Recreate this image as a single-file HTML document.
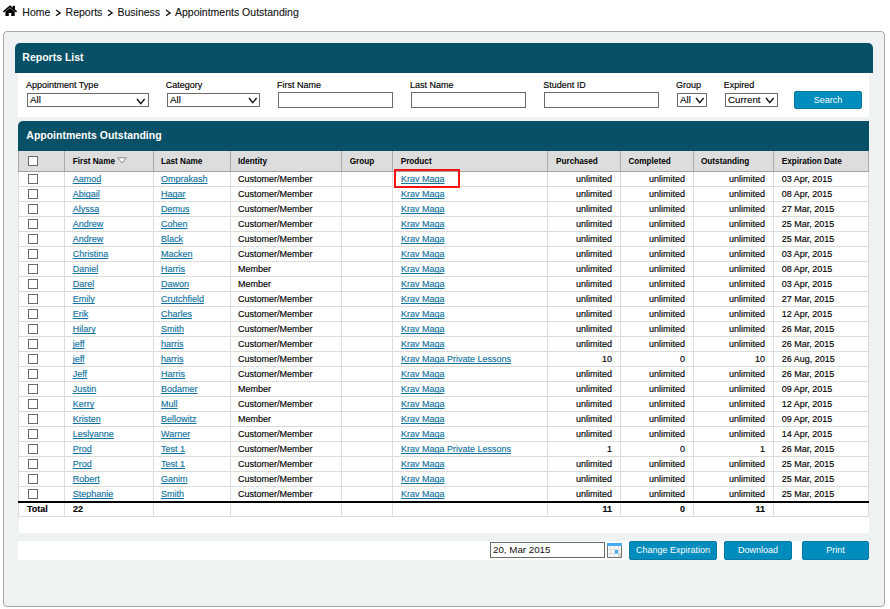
<!DOCTYPE html><html><head><meta charset="utf-8"><style>
*{margin:0;padding:0;box-sizing:border-box}
html,body{width:890px;height:609px;overflow:hidden;background:#fff}
body{position:relative;font-family:"Liberation Sans",sans-serif;color:#222}
.a{position:absolute;white-space:nowrap}
.crumb{font-size:10.5px;color:#111;-webkit-text-stroke-width:0.1px;top:5px;line-height:14px}
.sep{top:9px}
.panel{left:3px;top:31px;width:882px;height:576px;background:#eff2f3;border:1px solid #a8a8a8;border-radius:4px}
.hdr{background:#075066;border-radius:5px 5px 0 0}
.hdrt{color:#fff;font-weight:bold;font-size:10.5px;line-height:12px}
.wh{background:#fff}
.lbl{font-size:9px;color:#000;line-height:10px;-webkit-text-stroke-width:0.15px}
.sel{background:#fff;border:1px solid #6b6b6b;font-size:9.75px;line-height:12px;color:#000;-webkit-text-stroke-width:0.1px}
.inp{background:#fff;border:1px solid #6b6b6b}
.btn{background:#008cbc;border:1px solid #0679a6;border-radius:2px;color:#fff;font-size:9px;text-align:center}
.th{font-weight:bold;font-size:8.2px;color:#000;line-height:10px}
.td{font-size:9px;color:#000;line-height:15px;-webkit-text-stroke-width:0.15px}
.lk{color:#13749f;text-decoration:underline;text-decoration-skip-ink:none}
.r{text-align:right}
.cb{width:10px;height:10px;border:1px solid #6a6a6a;border-radius:0;background:#fff}
.vl{width:1px}
.hl{height:1px}
</style></head><body>
<svg class="a" style="left:0;top:2px" width="20" height="18" viewBox="0 0 20 18"><path d="M3.4 9.8 L10 4.3 L16.6 9.8" stroke="#000" stroke-width="1.7" fill="none"/><rect x="12.7" y="3.8" width="2.3" height="3.8" fill="#000"/><path d="M5.4 9.6 L10 6.1 L14.7 9.6 V13.9 H11.3 V10.9 H8.8 V13.9 H5.4 Z" fill="#000"/></svg>
<div class="a crumb" style="left:22.3px">Home</div>
<div class="a crumb" style="left:65.6px">Reports</div>
<div class="a crumb" style="left:117.5px">Business</div>
<div class="a crumb" style="left:175px">Appointments Outstanding</div>
<svg class="a" style="left:55.2px;top:8.5px" width="7" height="8" viewBox="0 0 7 8"><path d="M1 1 L5.2 3.9 L1 6.8" stroke="#111" stroke-width="1.3" fill="none"/></svg>
<svg class="a" style="left:107.2px;top:8.5px" width="7" height="8" viewBox="0 0 7 8"><path d="M1 1 L5.2 3.9 L1 6.8" stroke="#111" stroke-width="1.3" fill="none"/></svg>
<svg class="a" style="left:164.7px;top:8.5px" width="7" height="8" viewBox="0 0 7 8"><path d="M1 1 L5.2 3.9 L1 6.8" stroke="#111" stroke-width="1.3" fill="none"/></svg>
<div class="a panel"></div>
<div class="a hdr" style="left:15px;top:43px;width:858px;height:30px"></div>
<div class="a hdrt" style="left:22.3px;top:51px">Reports List</div>
<div class="a wh" style="left:18px;top:73px;width:851px;height:44px"></div>
<div class="a lbl" style="left:26px;top:80px">Appointment Type</div>
<div class="a lbl" style="left:165.7px;top:80px">Category</div>
<div class="a lbl" style="left:277px;top:80px">First Name</div>
<div class="a lbl" style="left:410px;top:80px">Last Name</div>
<div class="a lbl" style="left:543.3px;top:80px">Student ID</div>
<div class="a lbl" style="left:676px;top:80px">Group</div>
<div class="a lbl" style="left:723.7px;top:80px">Expired</div>
<div class="a sel" style="left:27px;top:93px;width:122px;height:14px;padding-left:2px">All</div>
<svg class="a" style="left:136px;top:97.5px" width="10" height="7" viewBox="0 0 10 7"><path d="M1 1 L4.8 5.6 L8.6 1" stroke="#111" stroke-width="1.4" fill="none"/></svg>
<div class="a sel" style="left:167px;top:93px;width:93px;height:14px;padding-left:2px">All</div>
<svg class="a" style="left:247.5px;top:97px" width="10" height="7" viewBox="0 0 10 7"><path d="M1 1 L4.8 5.6 L8.6 1" stroke="#111" stroke-width="1.4" fill="none"/></svg>
<div class="a sel" style="left:677px;top:93px;width:30px;height:14px;padding-left:2px">All</div>
<svg class="a" style="left:695px;top:96.5px" width="10" height="7" viewBox="0 0 10 7"><path d="M1 1 L4.8 5.6 L8.6 1" stroke="#111" stroke-width="1.4" fill="none"/></svg>
<div class="a sel" style="left:725px;top:93px;width:53px;height:14px;padding-left:2px">Current</div>
<svg class="a" style="left:764.5px;top:97px" width="10" height="7" viewBox="0 0 10 7"><path d="M1 1 L4.8 5.6 L8.6 1" stroke="#111" stroke-width="1.4" fill="none"/></svg>
<div class="a inp" style="left:278px;top:92px;width:115px;height:16px"></div>
<div class="a inp" style="left:411px;top:92px;width:115px;height:16px"></div>
<div class="a inp" style="left:544px;top:92px;width:115px;height:16px"></div>
<div class="a btn" style="left:794px;top:91px;width:68px;height:18px;line-height:16px">Search</div>
<div class="a hdr" style="left:18px;top:121px;width:851px;height:30px;border-radius:5px 0 0 0"></div>
<div class="a hdrt" style="left:26.3px;top:129px">Appointments Outstanding</div>
<div class="a wh" style="left:18px;top:151px;width:851px;height:366px"></div>
<div class="a" style="left:18px;top:151px;width:851px;height:20px;background:#dddddd"></div>
<div class="a hl" style="left:18px;top:171px;width:851px;background:#a3a3a3"></div>
<div class="a vl" style="left:18px;top:151px;height:20px;background:#aaaaaa"></div>
<div class="a vl" style="left:64px;top:151px;height:20px;background:#aaaaaa"></div>
<div class="a vl" style="left:153px;top:151px;height:20px;background:#aaaaaa"></div>
<div class="a vl" style="left:230px;top:151px;height:20px;background:#aaaaaa"></div>
<div class="a vl" style="left:341px;top:151px;height:20px;background:#aaaaaa"></div>
<div class="a vl" style="left:392px;top:151px;height:20px;background:#aaaaaa"></div>
<div class="a vl" style="left:547px;top:151px;height:20px;background:#aaaaaa"></div>
<div class="a vl" style="left:620px;top:151px;height:20px;background:#aaaaaa"></div>
<div class="a vl" style="left:693px;top:151px;height:20px;background:#aaaaaa"></div>
<div class="a vl" style="left:773px;top:151px;height:20px;background:#aaaaaa"></div>
<div class="a vl" style="left:868px;top:151px;height:20px;background:#aaaaaa"></div>
<div class="a vl" style="left:18px;top:172px;height:345px;background:#dcdcdc"></div>
<div class="a vl" style="left:64px;top:172px;height:345px;background:#dcdcdc"></div>
<div class="a vl" style="left:153px;top:172px;height:345px;background:#dcdcdc"></div>
<div class="a vl" style="left:230px;top:172px;height:345px;background:#dcdcdc"></div>
<div class="a vl" style="left:341px;top:172px;height:345px;background:#dcdcdc"></div>
<div class="a vl" style="left:392px;top:172px;height:345px;background:#dcdcdc"></div>
<div class="a vl" style="left:547px;top:172px;height:345px;background:#dcdcdc"></div>
<div class="a vl" style="left:620px;top:172px;height:345px;background:#dcdcdc"></div>
<div class="a vl" style="left:693px;top:172px;height:345px;background:#dcdcdc"></div>
<div class="a vl" style="left:773px;top:172px;height:345px;background:#dcdcdc"></div>
<div class="a vl" style="left:868px;top:172px;height:345px;background:#dcdcdc"></div>
<div class="a hl" style="left:18px;top:186px;width:851px;background:#dcdcdc"></div>
<div class="a hl" style="left:18px;top:201px;width:851px;background:#dcdcdc"></div>
<div class="a hl" style="left:18px;top:216px;width:851px;background:#dcdcdc"></div>
<div class="a hl" style="left:18px;top:231px;width:851px;background:#dcdcdc"></div>
<div class="a hl" style="left:18px;top:246px;width:851px;background:#dcdcdc"></div>
<div class="a hl" style="left:18px;top:261px;width:851px;background:#dcdcdc"></div>
<div class="a hl" style="left:18px;top:276px;width:851px;background:#dcdcdc"></div>
<div class="a hl" style="left:18px;top:291px;width:851px;background:#dcdcdc"></div>
<div class="a hl" style="left:18px;top:306px;width:851px;background:#dcdcdc"></div>
<div class="a hl" style="left:18px;top:321px;width:851px;background:#dcdcdc"></div>
<div class="a hl" style="left:18px;top:336px;width:851px;background:#dcdcdc"></div>
<div class="a hl" style="left:18px;top:351px;width:851px;background:#dcdcdc"></div>
<div class="a hl" style="left:18px;top:366px;width:851px;background:#dcdcdc"></div>
<div class="a hl" style="left:18px;top:381px;width:851px;background:#dcdcdc"></div>
<div class="a hl" style="left:18px;top:396px;width:851px;background:#dcdcdc"></div>
<div class="a hl" style="left:18px;top:411px;width:851px;background:#dcdcdc"></div>
<div class="a hl" style="left:18px;top:426px;width:851px;background:#dcdcdc"></div>
<div class="a hl" style="left:18px;top:441px;width:851px;background:#dcdcdc"></div>
<div class="a hl" style="left:18px;top:456px;width:851px;background:#dcdcdc"></div>
<div class="a hl" style="left:18px;top:471px;width:851px;background:#dcdcdc"></div>
<div class="a hl" style="left:18px;top:486px;width:851px;background:#dcdcdc"></div>
<div class="a" style="left:18px;top:501px;width:851px;height:2px;background:#000"></div>
<div class="a hl" style="left:18px;top:516px;width:851px;background:#dcdcdc"></div>
<div class="cb a" style="left:28px;top:156px"></div>
<div class="a th" style="left:72.7px;top:157px">First Name</div>
<div class="a th" style="left:161px;top:157px">Last Name</div>
<div class="a th" style="left:238px;top:157px">Identity</div>
<div class="a th" style="left:349.7px;top:157px">Group</div>
<div class="a th" style="left:400.7px;top:157px">Product</div>
<div class="a th" style="left:556px;top:157px">Purchased</div>
<div class="a th" style="left:628.4px;top:157px">Completed</div>
<div class="a th" style="left:701px;top:157px">Outstanding</div>
<div class="a th" style="left:781.7px;top:157px">Expiration Date</div>
<svg class="a" style="left:117px;top:157px" width="10" height="7" viewBox="0 0 10 7"><path d="M0.8 0.8 L9.2 0.8 L5 6 Z" stroke="#8a8a8a" stroke-width="1" fill="#fff"/></svg>
<div class="cb a" style="left:28px;top:174px"></div>
<div class="a td" style="left:72.7px;top:172px"><span class="lk">Aamod</span></div>
<div class="a td" style="left:161px;top:172px"><span class="lk">Omprakash</span></div>
<div class="a td" style="left:238px;top:172px">Customer/Member</div>
<div class="a td" style="left:401px;top:172px"><span class="lk">Krav Maga</span></div>
<div class="a td r" style="right:278px;top:172px">unlimited</div>
<div class="a td r" style="right:205px;top:172px">unlimited</div>
<div class="a td r" style="right:125px;top:172px">unlimited</div>
<div class="a td" style="left:781.7px;top:172px">03 Apr, 2015</div>
<div class="cb a" style="left:28px;top:189px"></div>
<div class="a td" style="left:72.7px;top:187px"><span class="lk">Abigail</span></div>
<div class="a td" style="left:161px;top:187px"><span class="lk">Hagar</span></div>
<div class="a td" style="left:238px;top:187px">Customer/Member</div>
<div class="a td" style="left:401px;top:187px"><span class="lk">Krav Maga</span></div>
<div class="a td r" style="right:278px;top:187px">unlimited</div>
<div class="a td r" style="right:205px;top:187px">unlimited</div>
<div class="a td r" style="right:125px;top:187px">unlimited</div>
<div class="a td" style="left:781.7px;top:187px">08 Apr, 2015</div>
<div class="cb a" style="left:28px;top:204px"></div>
<div class="a td" style="left:72.7px;top:202px"><span class="lk">Alyssa</span></div>
<div class="a td" style="left:161px;top:202px"><span class="lk">Demus</span></div>
<div class="a td" style="left:238px;top:202px">Customer/Member</div>
<div class="a td" style="left:401px;top:202px"><span class="lk">Krav Maga</span></div>
<div class="a td r" style="right:278px;top:202px">unlimited</div>
<div class="a td r" style="right:205px;top:202px">unlimited</div>
<div class="a td r" style="right:125px;top:202px">unlimited</div>
<div class="a td" style="left:781.7px;top:202px">27 Mar, 2015</div>
<div class="cb a" style="left:28px;top:219px"></div>
<div class="a td" style="left:72.7px;top:217px"><span class="lk">Andrew</span></div>
<div class="a td" style="left:161px;top:217px"><span class="lk">Cohen</span></div>
<div class="a td" style="left:238px;top:217px">Customer/Member</div>
<div class="a td" style="left:401px;top:217px"><span class="lk">Krav Maga</span></div>
<div class="a td r" style="right:278px;top:217px">unlimited</div>
<div class="a td r" style="right:205px;top:217px">unlimited</div>
<div class="a td r" style="right:125px;top:217px">unlimited</div>
<div class="a td" style="left:781.7px;top:217px">25 Mar, 2015</div>
<div class="cb a" style="left:28px;top:234px"></div>
<div class="a td" style="left:72.7px;top:232px"><span class="lk">Andrew</span></div>
<div class="a td" style="left:161px;top:232px"><span class="lk">Black</span></div>
<div class="a td" style="left:238px;top:232px">Customer/Member</div>
<div class="a td" style="left:401px;top:232px"><span class="lk">Krav Maga</span></div>
<div class="a td r" style="right:278px;top:232px">unlimited</div>
<div class="a td r" style="right:205px;top:232px">unlimited</div>
<div class="a td r" style="right:125px;top:232px">unlimited</div>
<div class="a td" style="left:781.7px;top:232px">25 Mar, 2015</div>
<div class="cb a" style="left:28px;top:249px"></div>
<div class="a td" style="left:72.7px;top:247px"><span class="lk">Christina</span></div>
<div class="a td" style="left:161px;top:247px"><span class="lk">Macken</span></div>
<div class="a td" style="left:238px;top:247px">Customer/Member</div>
<div class="a td" style="left:401px;top:247px"><span class="lk">Krav Maga</span></div>
<div class="a td r" style="right:278px;top:247px">unlimited</div>
<div class="a td r" style="right:205px;top:247px">unlimited</div>
<div class="a td r" style="right:125px;top:247px">unlimited</div>
<div class="a td" style="left:781.7px;top:247px">03 Apr, 2015</div>
<div class="cb a" style="left:28px;top:264px"></div>
<div class="a td" style="left:72.7px;top:262px"><span class="lk">Daniel</span></div>
<div class="a td" style="left:161px;top:262px"><span class="lk">Harris</span></div>
<div class="a td" style="left:238px;top:262px">Member</div>
<div class="a td" style="left:401px;top:262px"><span class="lk">Krav Maga</span></div>
<div class="a td r" style="right:278px;top:262px">unlimited</div>
<div class="a td r" style="right:205px;top:262px">unlimited</div>
<div class="a td r" style="right:125px;top:262px">unlimited</div>
<div class="a td" style="left:781.7px;top:262px">08 Apr, 2015</div>
<div class="cb a" style="left:28px;top:279px"></div>
<div class="a td" style="left:72.7px;top:277px"><span class="lk">Darel</span></div>
<div class="a td" style="left:161px;top:277px"><span class="lk">Dawon</span></div>
<div class="a td" style="left:238px;top:277px">Member</div>
<div class="a td" style="left:401px;top:277px"><span class="lk">Krav Maga</span></div>
<div class="a td r" style="right:278px;top:277px">unlimited</div>
<div class="a td r" style="right:205px;top:277px">unlimited</div>
<div class="a td r" style="right:125px;top:277px">unlimited</div>
<div class="a td" style="left:781.7px;top:277px">03 Apr, 2015</div>
<div class="cb a" style="left:28px;top:294px"></div>
<div class="a td" style="left:72.7px;top:292px"><span class="lk">Emily</span></div>
<div class="a td" style="left:161px;top:292px"><span class="lk">Crutchfield</span></div>
<div class="a td" style="left:238px;top:292px">Customer/Member</div>
<div class="a td" style="left:401px;top:292px"><span class="lk">Krav Maga</span></div>
<div class="a td r" style="right:278px;top:292px">unlimited</div>
<div class="a td r" style="right:205px;top:292px">unlimited</div>
<div class="a td r" style="right:125px;top:292px">unlimited</div>
<div class="a td" style="left:781.7px;top:292px">27 Mar, 2015</div>
<div class="cb a" style="left:28px;top:309px"></div>
<div class="a td" style="left:72.7px;top:307px"><span class="lk">Erik</span></div>
<div class="a td" style="left:161px;top:307px"><span class="lk">Charles</span></div>
<div class="a td" style="left:238px;top:307px">Customer/Member</div>
<div class="a td" style="left:401px;top:307px"><span class="lk">Krav Maga</span></div>
<div class="a td r" style="right:278px;top:307px">unlimited</div>
<div class="a td r" style="right:205px;top:307px">unlimited</div>
<div class="a td r" style="right:125px;top:307px">unlimited</div>
<div class="a td" style="left:781.7px;top:307px">12 Apr, 2015</div>
<div class="cb a" style="left:28px;top:324px"></div>
<div class="a td" style="left:72.7px;top:322px"><span class="lk">Hilary</span></div>
<div class="a td" style="left:161px;top:322px"><span class="lk">Smith</span></div>
<div class="a td" style="left:238px;top:322px">Customer/Member</div>
<div class="a td" style="left:401px;top:322px"><span class="lk">Krav Maga</span></div>
<div class="a td r" style="right:278px;top:322px">unlimited</div>
<div class="a td r" style="right:205px;top:322px">unlimited</div>
<div class="a td r" style="right:125px;top:322px">unlimited</div>
<div class="a td" style="left:781.7px;top:322px">26 Mar, 2015</div>
<div class="cb a" style="left:28px;top:339px"></div>
<div class="a td" style="left:72.7px;top:337px"><span class="lk">jeff</span></div>
<div class="a td" style="left:161px;top:337px"><span class="lk">harris</span></div>
<div class="a td" style="left:238px;top:337px">Customer/Member</div>
<div class="a td" style="left:401px;top:337px"><span class="lk">Krav Maga</span></div>
<div class="a td r" style="right:278px;top:337px">unlimited</div>
<div class="a td r" style="right:205px;top:337px">unlimited</div>
<div class="a td r" style="right:125px;top:337px">unlimited</div>
<div class="a td" style="left:781.7px;top:337px">26 Mar, 2015</div>
<div class="cb a" style="left:28px;top:354px"></div>
<div class="a td" style="left:72.7px;top:352px"><span class="lk">jeff</span></div>
<div class="a td" style="left:161px;top:352px"><span class="lk">harris</span></div>
<div class="a td" style="left:238px;top:352px">Customer/Member</div>
<div class="a td" style="left:401px;top:352px"><span class="lk">Krav Maga Private Lessons</span></div>
<div class="a td r" style="right:278px;top:352px">10</div>
<div class="a td r" style="right:205px;top:352px">0</div>
<div class="a td r" style="right:125px;top:352px">10</div>
<div class="a td" style="left:781.7px;top:352px">26 Aug, 2015</div>
<div class="cb a" style="left:28px;top:369px"></div>
<div class="a td" style="left:72.7px;top:367px"><span class="lk">Jeff</span></div>
<div class="a td" style="left:161px;top:367px"><span class="lk">Harris</span></div>
<div class="a td" style="left:238px;top:367px">Customer/Member</div>
<div class="a td" style="left:401px;top:367px"><span class="lk">Krav Maga</span></div>
<div class="a td r" style="right:278px;top:367px">unlimited</div>
<div class="a td r" style="right:205px;top:367px">unlimited</div>
<div class="a td r" style="right:125px;top:367px">unlimited</div>
<div class="a td" style="left:781.7px;top:367px">26 Mar, 2015</div>
<div class="cb a" style="left:28px;top:384px"></div>
<div class="a td" style="left:72.7px;top:382px"><span class="lk">Justin</span></div>
<div class="a td" style="left:161px;top:382px"><span class="lk">Bodamer</span></div>
<div class="a td" style="left:238px;top:382px">Member</div>
<div class="a td" style="left:401px;top:382px"><span class="lk">Krav Maga</span></div>
<div class="a td r" style="right:278px;top:382px">unlimited</div>
<div class="a td r" style="right:205px;top:382px">unlimited</div>
<div class="a td r" style="right:125px;top:382px">unlimited</div>
<div class="a td" style="left:781.7px;top:382px">09 Apr, 2015</div>
<div class="cb a" style="left:28px;top:399px"></div>
<div class="a td" style="left:72.7px;top:397px"><span class="lk">Kerry</span></div>
<div class="a td" style="left:161px;top:397px"><span class="lk">Mull</span></div>
<div class="a td" style="left:238px;top:397px">Customer/Member</div>
<div class="a td" style="left:401px;top:397px"><span class="lk">Krav Maga</span></div>
<div class="a td r" style="right:278px;top:397px">unlimited</div>
<div class="a td r" style="right:205px;top:397px">unlimited</div>
<div class="a td r" style="right:125px;top:397px">unlimited</div>
<div class="a td" style="left:781.7px;top:397px">12 Apr, 2015</div>
<div class="cb a" style="left:28px;top:414px"></div>
<div class="a td" style="left:72.7px;top:412px"><span class="lk">Kristen</span></div>
<div class="a td" style="left:161px;top:412px"><span class="lk">Bellowitz</span></div>
<div class="a td" style="left:238px;top:412px">Member</div>
<div class="a td" style="left:401px;top:412px"><span class="lk">Krav Maga</span></div>
<div class="a td r" style="right:278px;top:412px">unlimited</div>
<div class="a td r" style="right:205px;top:412px">unlimited</div>
<div class="a td r" style="right:125px;top:412px">unlimited</div>
<div class="a td" style="left:781.7px;top:412px">09 Apr, 2015</div>
<div class="cb a" style="left:28px;top:429px"></div>
<div class="a td" style="left:72.7px;top:427px"><span class="lk">Leslyanne</span></div>
<div class="a td" style="left:161px;top:427px"><span class="lk">Warner</span></div>
<div class="a td" style="left:238px;top:427px">Customer/Member</div>
<div class="a td" style="left:401px;top:427px"><span class="lk">Krav Maga</span></div>
<div class="a td r" style="right:278px;top:427px">unlimited</div>
<div class="a td r" style="right:205px;top:427px">unlimited</div>
<div class="a td r" style="right:125px;top:427px">unlimited</div>
<div class="a td" style="left:781.7px;top:427px">14 Apr, 2015</div>
<div class="cb a" style="left:28px;top:444px"></div>
<div class="a td" style="left:72.7px;top:442px"><span class="lk">Prod</span></div>
<div class="a td" style="left:161px;top:442px"><span class="lk">Test 1</span></div>
<div class="a td" style="left:238px;top:442px">Customer/Member</div>
<div class="a td" style="left:401px;top:442px"><span class="lk">Krav Maga Private Lessons</span></div>
<div class="a td r" style="right:278px;top:442px">1</div>
<div class="a td r" style="right:205px;top:442px">0</div>
<div class="a td r" style="right:125px;top:442px">1</div>
<div class="a td" style="left:781.7px;top:442px">26 Mar, 2015</div>
<div class="cb a" style="left:28px;top:459px"></div>
<div class="a td" style="left:72.7px;top:457px"><span class="lk">Prod</span></div>
<div class="a td" style="left:161px;top:457px"><span class="lk">Test 1</span></div>
<div class="a td" style="left:238px;top:457px">Customer/Member</div>
<div class="a td" style="left:401px;top:457px"><span class="lk">Krav Maga</span></div>
<div class="a td r" style="right:278px;top:457px">unlimited</div>
<div class="a td r" style="right:205px;top:457px">unlimited</div>
<div class="a td r" style="right:125px;top:457px">unlimited</div>
<div class="a td" style="left:781.7px;top:457px">25 Mar, 2015</div>
<div class="cb a" style="left:28px;top:474px"></div>
<div class="a td" style="left:72.7px;top:472px"><span class="lk">Robert</span></div>
<div class="a td" style="left:161px;top:472px"><span class="lk">Ganim</span></div>
<div class="a td" style="left:238px;top:472px">Customer/Member</div>
<div class="a td" style="left:401px;top:472px"><span class="lk">Krav Maga</span></div>
<div class="a td r" style="right:278px;top:472px">unlimited</div>
<div class="a td r" style="right:205px;top:472px">unlimited</div>
<div class="a td r" style="right:125px;top:472px">unlimited</div>
<div class="a td" style="left:781.7px;top:472px">25 Mar, 2015</div>
<div class="cb a" style="left:28px;top:489px"></div>
<div class="a td" style="left:72.7px;top:487px"><span class="lk">Stephanie</span></div>
<div class="a td" style="left:161px;top:487px"><span class="lk">Smith</span></div>
<div class="a td" style="left:238px;top:487px">Customer/Member</div>
<div class="a td" style="left:401px;top:487px"><span class="lk">Krav Maga</span></div>
<div class="a td r" style="right:278px;top:487px">unlimited</div>
<div class="a td r" style="right:205px;top:487px">unlimited</div>
<div class="a td r" style="right:125px;top:487px">unlimited</div>
<div class="a td" style="left:781.7px;top:487px">25 Mar, 2015</div>
<div class="a td" style="left:27px;top:502px;font-weight:bold">Total</div>
<div class="a td" style="left:73px;top:502px;font-weight:bold">22</div>
<div class="a td r" style="right:278px;top:502px;font-weight:bold">11</div>
<div class="a td r" style="right:205px;top:502px;font-weight:bold">0</div>
<div class="a td r" style="right:125px;top:502px;font-weight:bold">11</div>
<div class="a" style="left:394px;top:169px;width:66px;height:19px;border:2px solid #f41414"></div>
<div class="a wh" style="left:19px;top:517px;width:850px;height:16px"></div>
<div class="a wh" style="left:18px;top:541px;width:851px;height:19px"></div>
<div class="a inp" style="left:490px;top:542px;width:115px;height:16px;font-size:9.75px;line-height:14px;padding-left:2px;color:#111">20, Mar 2015</div>
<svg class="a" style="left:607px;top:543px" width="15" height="15" viewBox="0 0 15 15">
<rect x="0" y="0" width="15" height="3" fill="#45adf3"/>
<rect x="1" y="3" width="13" height="11" fill="#fbfbfb"/>
<path d="M3.5 3 V14 M7.5 3 V14 M11.5 3 V14 M1 6.5 H14 M1 10.5 H14" stroke="#dedede" stroke-width="1"/>
<rect x="12" y="11" width="2" height="3" fill="#d4d4d4"/>
<rect x="8" y="7" width="3" height="3.5" fill="#45adf3"/>
<path d="M0.5 3 V14.5 H14.5 V3" stroke="#737373" stroke-width="1" fill="none"/>
</svg>
<div class="a btn" style="left:629px;top:541px;width:88px;height:19px;line-height:16px">Change Expiration</div>
<div class="a btn" style="left:724px;top:541px;width:68px;height:19px;line-height:16px">Download</div>
<div class="a btn" style="left:802px;top:541px;width:67px;height:19px;line-height:16px">Print</div>
</body></html>
